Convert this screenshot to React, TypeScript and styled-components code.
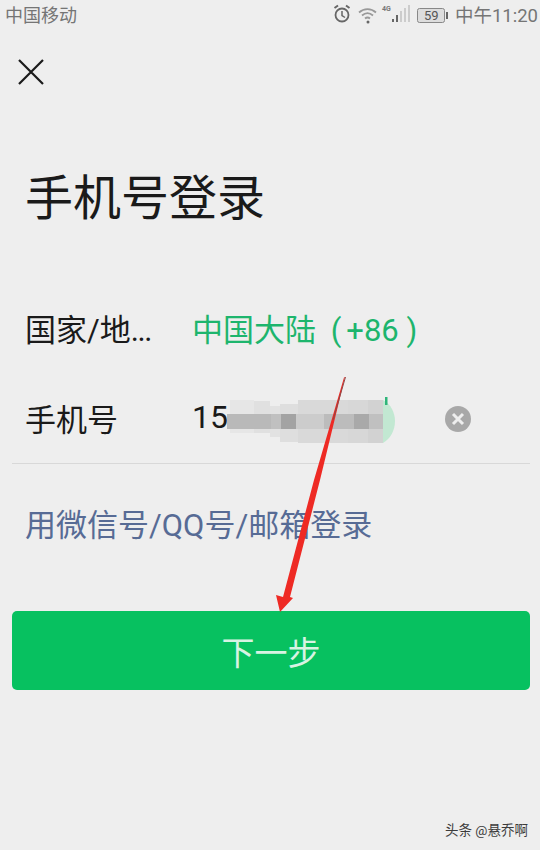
import styled, { createGlobalStyle } from "styled-components";

const GlobalStyle = createGlobalStyle`
  html, body {
    margin: 0;
    padding: 0;
    background: #eeeeee;
  }
  * {
    box-sizing: border-box;
  }
`;

const Page = styled.div`
  position: relative;
  width: 540px;
  height: 850px;
  overflow: hidden;
  background: #eeeeee;
  font-family: "Roboto", "Noto Sans CJK SC", sans-serif;
  color: #1a1a1a;
`;

const StatusBar = styled.div`
  height: 30px;
  padding: 0 2px 2px 5px;
  display: flex;
  align-items: center;
  justify-content: space-between;
  color: #757575;
  font-size: 18px;
`;

const StatusRight = styled.div`
  display: flex;
  align-items: center;
`;

const Clock = styled.span`
  margin-left: 6px;
  font-size: 18.5px;
`;

const CloseButton = styled.div`
  margin: 28px 0 0 17px;
  width: 28px;
  height: 28px;
`;

const Title = styled.h1`
  margin: 85px 0 0 25px;
  font-size: 48px;
  line-height: 56px;
  font-weight: 400;
`;

const Form = styled.div`
  margin: 55px 10px 0 12px;
  border-bottom: 1px solid #d8d8d8;
  padding-bottom: 1px;
`;

const Row = styled.div`
  position: relative;
  height: 90px;
  display: flex;
  align-items: center;
  font-size: 31px;
  padding-left: 13px;
`;

const Label = styled.div`
  width: 167px;
  white-space: nowrap;
`;

const Dots = styled.span`
  letter-spacing: -1.4px;
`;

const RegionValue = styled.div`
  color: #1db56d;
  white-space: pre;
`;

const RegionPart = styled.span<{ $gap: number }>`
  margin-left: ${(p) => p.$gap}px;
`;

const PhoneValue = styled.div`
  font-size: 32px;
`;

const ClearIcon = styled.div`
  position: absolute;
  left: 433px;
  top: 31px;
  width: 26px;
  height: 26px;
`;

const AltLogin = styled.div`
  margin: 40px 0 0 25px;
  font-size: 31px;
  line-height: 44px;
  color: #576b95;
`;

const NextButton = styled.button`
  display: block;
  margin: 63px 0 0 12px;
  width: 518px;
  height: 79px;
  border: 0;
  border-radius: 5px;
  background: #07c160;
  color: #d8f3e3;
  font-family: inherit;
  font-size: 33px;
`;

const Overlay = styled.svg`
  position: absolute;
  left: 0;
  top: 0;
  pointer-events: none;
`;

const Mosaic = styled.g`
  filter: blur(0.7px);
`;

const Watermark = styled.div`
  position: absolute;
  right: 12px;
  bottom: 11px;
  font-size: 13.5px;
  color: #3c3c3c;
  white-space: nowrap;
`;

const mosaic: [number, number, number, number, string][] = [
  [230, 400, 24, 33, "#e6e6e6"],
  [254, 401, 16, 32, "#e0e0e0"],
  [270, 406, 10, 31, "#e2e2e2"],
  [280, 404, 18, 38, "#dedede"],
  [298, 400, 50, 43, "#d9d9d9"],
  [348, 400, 20, 43, "#d7d7d7"],
  [368, 400, 15, 43, "#d2d2d2"],
  [227, 414, 44, 15, "#b9b9b9"],
  [271, 414, 10, 15, "#c0c0c0"],
  [281, 414, 15, 15, "#a3a3a3"],
  [296, 414, 28, 15, "#cccccc"],
  [324, 414, 30, 15, "#bcbcbc"],
  [354, 414, 15, 15, "#a9a9a9"],
  [369, 414, 14, 15, "#c0c0c0"],
];

function App() {
  return (
    <Page>
      <GlobalStyle />
      <StatusBar>
        <span>中国移动</span>
        <StatusRight>
          <svg width="116" height="22" viewBox="0 0 116 22" fill="none">
            <circle cx="9" cy="12" r="6.5" stroke="#666" strokeWidth="1.8" />
            <path d="M9 8v4.5l3 2" stroke="#666" strokeWidth="1.5" />
            <path d="M1.5 5 5 2.5M16.5 5 13 2.5" stroke="#666" strokeWidth="2" />
            <path d="M26 9.5c5-4.5 12-4.5 17 0" stroke="#999" strokeWidth="1.8" />
            <path d="M29 12.5c3.5-3 7.5-3 11 0" stroke="#999" strokeWidth="1.8" />
            <path d="M32 15.5c1.8-1.5 3.2-1.5 5 0" stroke="#999" strokeWidth="1.8" />
            <circle cx="35" cy="19" r="1.5" fill="#666" />
            <text x="49" y="8" fontSize="7" fontWeight="700" fill="#777" fontFamily="Roboto, sans-serif">4G</text>
            <rect x="59" y="16" width="2" height="3" fill="#666" />
            <rect x="63" y="12" width="2" height="7" fill="#666" />
            <rect x="67" y="8" width="2" height="11" fill="#ccc" />
            <rect x="71" y="5" width="2" height="14" fill="#ccc" />
            <rect x="75" y="2" width="2" height="17" fill="#ccc" />
            <rect x="84.5" y="5.5" width="27" height="14" rx="2" fill="#ddd" stroke="#888" />
            <text x="91" y="17" fontSize="13" fill="#555" fontFamily="Roboto, sans-serif">59</text>
            <rect x="113" y="9" width="2" height="7" fill="#666" />
          </svg>
          <Clock>中午11:20</Clock>
        </StatusRight>
      </StatusBar>

      <CloseButton>
        <svg width="28" height="28" viewBox="0 0 28 28" fill="none">
          <path d="M2 2 26 26M26 2 2 26" stroke="#1a1a1a" strokeWidth="2.2" />
        </svg>
      </CloseButton>

      <Title>手机号登录</Title>

      <Form>
        <Row>
          <Label>
            国家/地<Dots>...</Dots>
          </Label>
          <RegionValue>
            中国大陆 <RegionPart $gap={7}>(</RegionPart>
            <RegionPart $gap={5}>+86 )</RegionPart>
          </RegionValue>
        </Row>
        <Row>
          <Label>手机号</Label>
          <PhoneValue>15</PhoneValue>
          <ClearIcon>
            <svg width="26" height="26" viewBox="0 0 26 26" fill="none">
              <circle cx="13" cy="13" r="13" fill="#a8a8a8" />
              <path d="M8 8 18 18M18 8 8 18" stroke="#eeeeee" strokeWidth="3" />
            </svg>
          </ClearIcon>
        </Row>
      </Form>

      <AltLogin>用微信号/QQ号/邮箱登录</AltLogin>

      <NextButton>下一步</NextButton>

      <Overlay width="540" height="850" viewBox="0 0 540 850">
        <path d="M383 400C391 404 395 413 395 421C395 431 390 439 383 443Z" fill="#c2e8d2" />
        <rect x="385" y="397" width="2.5" height="8" fill="#2fb57a" />
        <Mosaic>
          {mosaic.map(([x, y, w, h, fill]) => (
            <rect key={`${x}-${y}`} x={x} y={y} width={w} height={h} fill={fill} />
          ))}
        </Mosaic>
        <path d="M345 377 L344 377.5 L314 480 L283 597 L276 595 L280 612 L293 598 L290 597 L320 480 Z" fill="#ee2a24" />
        <path d="M345.5 377 L333 420" stroke="#8a4a4a" strokeWidth="1" />
      </Overlay>

      <Watermark>头条 @悬乔啊</Watermark>
    </Page>
  );
}

export default App;
